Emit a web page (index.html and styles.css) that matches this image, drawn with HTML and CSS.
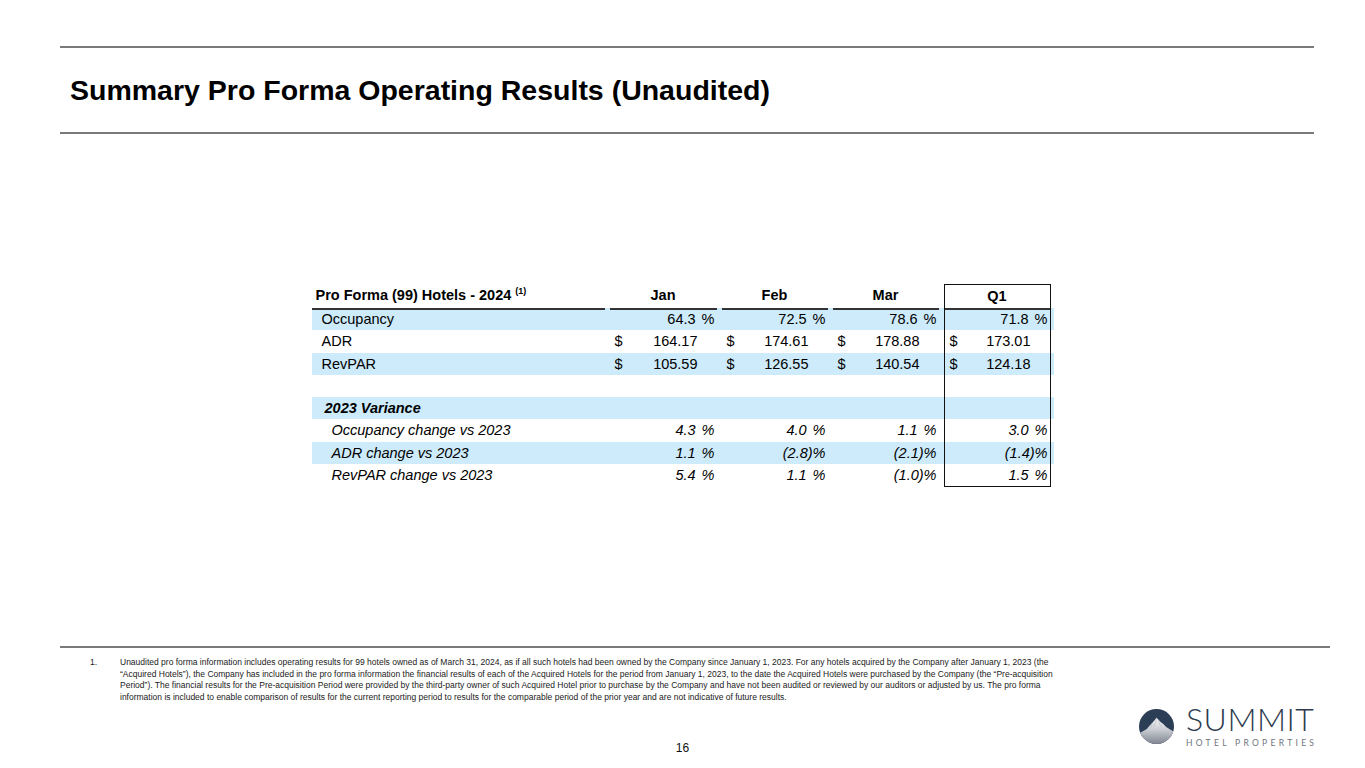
FILE: index.html
```html
<!DOCTYPE html>
<html lang="en">
<head>
<meta charset="utf-8">
<title>Summary Pro Forma Operating Results (Unaudited)</title>
<link rel="stylesheet" href="styles.css">
</head>
<body>
<div class="page">
  <div class="rule"></div>
  <header class="title-bar">
    <h1 class="title">Summary Pro Forma Operating Results (Unaudited)</h1>
  </header>
  <div class="rule"></div>

  <section class="table">
    <div class="row head">
      <div class="cell label">Pro Forma (99) Hotels - 2024 <sup>(1)</sup></div>
      <div class="cell hcol">Jan</div>
      <div class="cell hcol">Feb</div>
      <div class="cell hcol">Mar</div>
      <div class="cell hcol q1 q1-top">Q1</div>
    </div>

    <div class="row band">
      <div class="cell label">Occupancy</div>
      <div class="cell pct">64.3 %</div>
      <div class="cell pct">72.5 %</div>
      <div class="cell pct">78.6 %</div>
      <div class="cell pct q1">71.8 %</div>
    </div>
    <div class="row">
      <div class="cell label">ADR</div>
      <div class="cell usd"><span>$</span><span>164.17</span></div>
      <div class="cell usd"><span>$</span><span>174.61</span></div>
      <div class="cell usd"><span>$</span><span>178.88</span></div>
      <div class="cell usd q1"><span>$</span><span>173.01</span></div>
    </div>
    <div class="row band">
      <div class="cell label">RevPAR</div>
      <div class="cell usd"><span>$</span><span>105.59</span></div>
      <div class="cell usd"><span>$</span><span>126.55</span></div>
      <div class="cell usd"><span>$</span><span>140.54</span></div>
      <div class="cell usd q1"><span>$</span><span>124.18</span></div>
    </div>
    <div class="row">
      <div class="cell label"></div>
      <div class="cell"></div>
      <div class="cell"></div>
      <div class="cell"></div>
      <div class="cell q1"></div>
    </div>
    <div class="row band">
      <div class="cell label section">2023 Variance</div>
      <div class="cell"></div>
      <div class="cell"></div>
      <div class="cell"></div>
      <div class="cell q1"></div>
    </div>
    <div class="row ital">
      <div class="cell label sub">Occupancy change vs 2023</div>
      <div class="cell pct">4.3 %</div>
      <div class="cell pct">4.0 %</div>
      <div class="cell pct">1.1 %</div>
      <div class="cell pct q1">3.0 %</div>
    </div>
    <div class="row band ital">
      <div class="cell label sub">ADR change vs 2023</div>
      <div class="cell pct">1.1 %</div>
      <div class="cell pct">(2.8)%</div>
      <div class="cell pct">(2.1)%</div>
      <div class="cell pct q1">(1.4)%</div>
    </div>
    <div class="row ital">
      <div class="cell label sub">RevPAR change vs 2023</div>
      <div class="cell pct">5.4 %</div>
      <div class="cell pct">1.1 %</div>
      <div class="cell pct">(1.0)%</div>
      <div class="cell pct q1 q1-bottom">1.5 %</div>
    </div>
  </section>

  <div class="rule rule-foot"></div>

  <footer class="notes">
    <div class="note">
      <span class="note-num">1.</span>
      <p class="note-text">Unaudited pro forma information includes operating results for 99 hotels owned as of March 31, 2024, as if all such hotels had been owned by the Company since January 1, 2023. For any hotels acquired by the Company after January 1, 2023 (the<br>“Acquired Hotels”), the Company has included in the pro forma information the financial results of each of the Acquired Hotels for the period from January 1, 2023, to the date the Acquired Hotels were purchased by the Company (the “Pre-acquisition<br>Period”). The financial results for the Pre-acquisition Period were provided by the third-party owner of such Acquired Hotel prior to purchase by the Company and have not been audited or reviewed by our auditors or adjusted by us. The pro forma<br>information is included to enable comparison of results for the current reporting period to results for the comparable period of the prior year and are not indicative of future results.</p>
    </div>
  </footer>

  <div class="bottom">
    <div></div>
    <div class="page-num">16</div>
    <div class="logo">
      <svg class="logo-mark" width="35" height="35" viewBox="0 0 36 36" aria-hidden="true">
        <defs>
          <clipPath id="c"><circle cx="18" cy="18" r="18"/></clipPath>
          <linearGradient id="g" x1="0" y1="0" x2="0" y2="1">
            <stop offset="0" stop-color="#f7f7f9"/>
            <stop offset="0.45" stop-color="#c9ccd2"/>
            <stop offset="1" stop-color="#7f8590"/>
          </linearGradient>
        </defs>
        <g clip-path="url(#c)">
          <rect width="36" height="36" fill="#2c3d56"/>
          <path d="M0 25 L4 23 L8 20.5 L11 17 L13.5 14.5 L16 11.5 L18 9 L20 11 L22.5 13.5 L25 15.5 L28 18.5 L32 21 L36 23.5 L36 36 L0 36 Z" fill="url(#g)"/>
          <path d="M18 9 L17 14 L15 18 M20 11 L21 15 L23.5 18.5 M13.5 14.5 L12 19" stroke="#aeb3bc" stroke-width="0.6" fill="none"/>
        </g>
      </svg>
      <div class="logo-text">
        <div class="logo-name">SUMMIT</div>
        <div class="logo-sub">HOTEL PROPERTIES</div>
      </div>
    </div>
  </div>
</div>
</body>
</html>
```

FILE: styles.css
```css
* { box-sizing: border-box; }

html, body {
  margin: 0;
  padding: 0;
  background: #ffffff;
}

body {
  font-family: "Liberation Sans", Arial, sans-serif;
  color: #000;
}

.page {
  width: 1365px;
  height: 768px;
  overflow: hidden;
  display: flex;
  flex-direction: column;
  padding-top: 46px;
}

.rule {
  margin-left: 60px;
  width: 1254px;
  height: 2px;
  background: #7a7a7a;
  flex: none;
}

.rule-foot {
  width: 1270px;
  margin-top: 160px;
}

.title-bar {
  height: 84px;
  display: flex;
  align-items: center;
  padding-left: 70px;
}

.title {
  margin: 0;
  font-size: 28.5px;
  font-weight: 700;
  line-height: 1;
  color: #000;
}

/* Table */
.table {
  margin: 150px auto 0;
  width: 742px;
  font-size: 14.5px;
}

.row {
  display: grid;
  grid-template-columns: 293px 107px 106px 106px 107px;
  column-gap: 5px;
  height: 22.25px;
  line-height: 22.25px;
  padding-right: 3px;
}

.row.band { background: #cdebfa; }

.row.head {
  height: 24px;
  line-height: 22px;
  font-weight: 700;
}

.cell {
  white-space: nowrap;
  min-width: 0;
}

.head .cell {
  border-bottom: 2px solid #333;
}

.head .label {
  padding-left: 4px;
}

.head sup {
  font-size: 9px;
  vertical-align: 0;
  position: relative;
  top: -6px;
}

.hcol { text-align: center; }

.label { padding-left: 10px; }
.label.section {
  padding-left: 13px;
  font-weight: 700;
  font-style: italic;
}
.label.sub { padding-left: 20px; }

.ital { font-style: italic; }

.pct {
  text-align: right;
  padding-right: 2px;
  word-spacing: 2px;
}

.usd {
  display: flex;
  justify-content: space-between;
  padding-left: 5px;
  padding-right: 19px;
}

.q1 {
  border-left: 1px solid #111;
  border-right: 1px solid #111;
}
.q1-top { border-top: 1px solid #111; }
.q1-bottom { border-bottom: 1px solid #111; }

/* Footnotes */
.notes {
  margin-top: 9px;
  padding-left: 90px;
}

.note {
  display: flex;
  font-size: 8.5px;
  line-height: 11.7px;
  color: #1a1a1a;
}

.note-num { width: 30px; flex: none; }

.note-text {
  margin: 0;
  white-space: nowrap;
}

/* Bottom bar */
.bottom {
  display: grid;
  grid-template-columns: 1fr auto 1fr;
  align-items: end;
}

.page-num {
  font-size: 12px;
  line-height: 14px;
  color: #111;
}

.logo {
  justify-self: end;
  margin-right: 50px;
  display: flex;
  align-items: center;
  padding-bottom: 7px;
}

.logo-mark {
  display: block;
  margin-right: 12px;
}

.logo-text {
  display: flex;
  flex-direction: column;
  width: 129px;
}

.logo-name {
  font-family: Lato, "Open Sans", sans-serif;
  font-weight: 300;
  font-size: 32px;
  line-height: 30px;
  letter-spacing: 0.5px;
  color: #2d3a4d;
  white-space: nowrap;
}

.logo-sub {
  font-family: Lato, "Open Sans", sans-serif;
  font-size: 8.5px;
  line-height: 10px;
  margin-top: 4.5px;
  letter-spacing: 3.3px;
  color: #6f747c;
  white-space: nowrap;
}
```
